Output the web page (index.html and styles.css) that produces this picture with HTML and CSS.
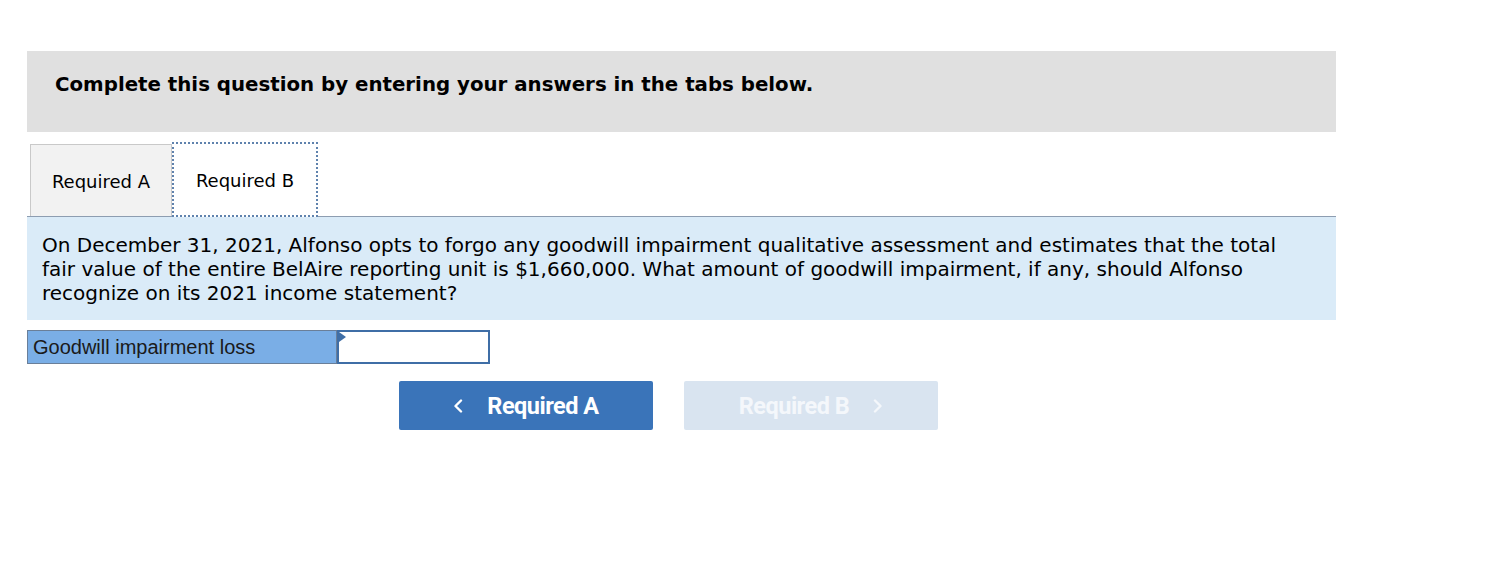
FILE: index.html
```html
<!DOCTYPE html>
<html>
<head>
<meta charset="utf-8">
<link rel="stylesheet" href="styles.css">
</head>
<body>
<div class="page">
  <div class="header">Complete this question by entering your answers in the tabs below.</div>
  <div class="tabs">
    <div class="tab tab-a">Required A</div>
    <div class="tab tab-b">Required B</div>
  </div>
  <div class="question">On December 31, 2021, Alfonso opts to forgo any goodwill impairment qualitative assessment and estimates that the total fair value of the entire BelAire reporting unit is $1,660,000. What amount of goodwill impairment, if any, should Alfonso recognize on its 2021 income statement?</div>
  <div class="answer">
    <div class="label">Goodwill impairment loss</div>
    <div class="input"><span class="marker"></span></div>
  </div>
  <div class="nav">
    <div class="btn btn-prev"><svg class="chev" width="10" height="14" viewBox="0 0 10 14"><path d="M8 1.5 L2.5 7 L8 12.5" fill="none" stroke="#fff" stroke-width="2.4" stroke-linecap="round" stroke-linejoin="round"/></svg><span>Required A</span></div>
    <div class="btn btn-next"><span>Required B</span><svg class="chev chev-r" width="10" height="14" viewBox="0 0 10 14"><path d="M2 1.5 L7.5 7 L2 12.5" fill="none" stroke="#f4f7fb" stroke-width="2.4" stroke-linecap="round" stroke-linejoin="round"/></svg></div>
  </div>
</div>
</body>
</html>
```
FILE: styles.css
```css
html, body { margin: 0; padding: 0; background: #fff; }
.page { padding: 51px 0 0 27px; width: 1309px; font-family: "DejaVu Sans", Verdana, sans-serif; color: #000; }
.header { background: #e0e0e0; height: 81px; box-sizing: border-box; padding: 22px 0 0 28px; font-weight: bold; font-size: 19.8px; }
.tabs { margin-top: 10px; height: 74px; border-bottom: 1px solid #8d9db1; display: flex; align-items: flex-end; padding-left: 3px; }
.tab { font-size: 18px; display: flex; align-items: center; justify-content: center; box-sizing: border-box; }
.tab-a { width: 142px; height: 72px; background: #f2f2f2; border: 1px solid #c9c9c9; border-bottom: none; padding-top: 2px; }
.tab-b { width: 146px; height: 75px; margin-bottom: -1px; background: #fff; border: 2px dotted #5f82ad; padding-top: 2px; }
.question { background: #daebf8; padding: 16px 22px 15px 15px; font-size: 20px; line-height: 24px; height: 103px; box-sizing: border-box; }
.answer { margin-top: 10px; display: flex; height: 34px; }
.label { width: 310px; box-sizing: border-box; background: #7aaee6; border: 1px solid #6a7f99; font-family: "Liberation Sans", Arial, sans-serif; font-size: 20px; color: #1a1a1a; padding: 5px 0 0 5px; }
.input { position: relative; width: 153px; box-sizing: border-box; border: 2px solid #3f6ea6; background: #fff; }
.marker { position: absolute; left: 0; top: 0; width: 0; height: 0; border-top: 5px solid transparent; border-bottom: 5px solid transparent; border-left: 7px solid #3f6ea6; }
.nav { margin-top: 17px; display: flex; gap: 31px; padding-left: 372px; }
.btn { width: 254px; height: 49px; border-radius: 2px; display: flex; align-items: center; justify-content: center; font-family: Roboto, sans-serif; font-weight: bold; font-size: 23.5px; letter-spacing: -0.5px; color: #fff; }
.btn-prev { background: #3a74b9; }
.btn-next { background: #d9e4f0; color: #f4f7fb; }
.chev { margin-right: 24px; }
.chev-r { margin-right: 0; margin-left: 24px; }
```
